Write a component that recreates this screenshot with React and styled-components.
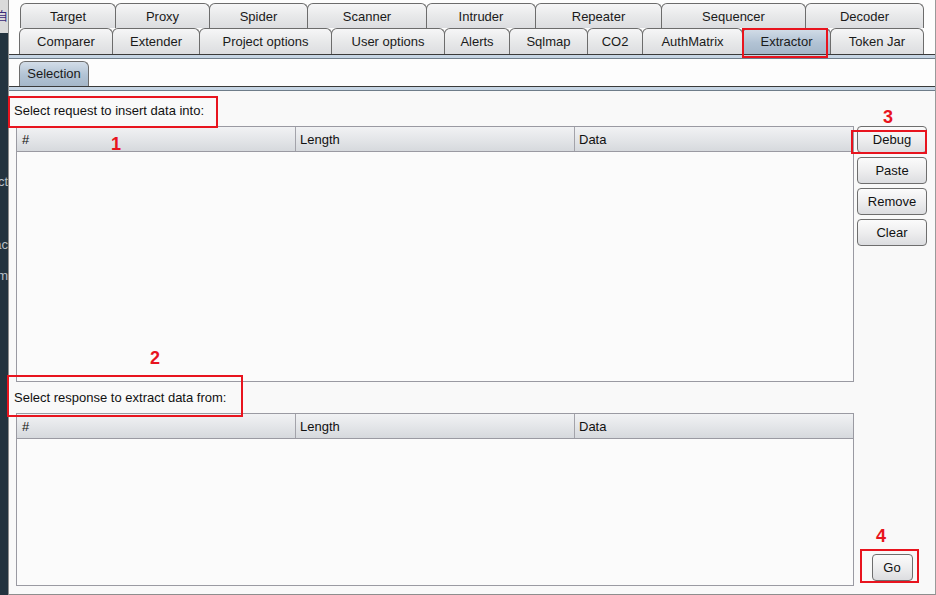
import React from "react";
import styled, { createGlobalStyle } from "styled-components";

const Global = createGlobalStyle`
  html, body { margin: 0; padding: 0; background: #f4f4f4; }
  body { font-family: "Liberation Sans", Arial, sans-serif; font-size: 13px; color: #1a1a1a; }
  * { box-sizing: border-box; }
`;

const Frame = styled.div`
  position: relative;
  width: 936px;
  height: 595px;
  display: flex;
  overflow: hidden;
`;

const Sidebar = styled.div`
  width: 8px;
  flex: none;
  display: flex;
  flex-direction: column;
  background: #23333f;
  overflow: hidden;
`;

const SideTop = styled.div`
  height: 33px;
  background: #dadada;
  color: #3a2a7a;
  font-family: "Noto Sans CJK SC", sans-serif;
  font-size: 12px;
  line-height: 1;
  padding-top: 10px;
  direction: rtl;
  white-space: nowrap;
`;

const SideText = styled.div`
  color: #b8c0c8;
  font-size: 13px;
  white-space: nowrap;
  direction: rtl;
  margin-top: ${(p) => p.$mt}px;
  line-height: 16px;
`;

const Window = styled.div`
  flex: 1;
  display: flex;
  flex-direction: column;
  border-left: 1px solid #8e8e8e;
  border-right: 1px solid #9a9a9a;
  border-bottom: 1px solid #8e8e8e;
  background: #fdfdfd;
`;

const TabStrip = styled.div`
  padding-top: 3px;
  display: flex;
  flex-direction: column;
`;

const TabRow = styled.div`
  display: flex;
  height: ${(p) => p.$h}px;
  padding-left: ${(p) => p.$pad}px;
`;

const Tab = styled.div`
  width: ${(p) => p.$w}px;
  flex: none;
  height: 100%;
  display: flex;
  align-items: center;
  justify-content: center;
  border: 1px solid #6c6c6c;
  border-bottom: none;
  border-radius: 6px 6px 0 0;
  background: ${(p) =>
    p.$active
      ? "linear-gradient(#d3dde8, #b2c3d4 55%, #a5b7c9)"
      : "linear-gradient(#f6f6f7, #e8e9ea 50%, #dcdde0)"};
  color: #1a1a1a;
  font-size: 13px;
  white-space: nowrap;
  & + & { margin-left: -1px; }
`;

const Rule = styled.div`
  height: 5px;
  flex: none;
  border-top: 1px solid #3a3a3a;
  border-bottom: 1px solid #6f7d8a;
  background: #c6d5e4;
`;

const SubTabBar = styled.div`
  height: 28px;
  display: flex;
  align-items: flex-end;
  padding-left: 10px;
  background: #fdfdfd;
`;

const SubTab = styled(Tab)`
  height: 25px;
  padding-bottom: 1px;
`;

const Content = styled.div`
  flex: 1;
  display: grid;
  grid-template-columns: 838px 70px;
  grid-template-rows: 35px 256px 31px 173px;
  column-gap: 3px;
  padding: 0 8px 8px 7px;
  background: #f9f9f9;
`;

const Label = styled.div`
  grid-column: 1 / -1;
  display: flex;
  align-items: center;
  margin-left: -2px;
  padding-top: ${(p) => p.$pt || 0}px;
  font-size: 13px;
  color: #111;
`;

const Table = styled.div`
  border: 1px solid #9a9aa2;
  background: #fbfbfb;
  display: flex;
  flex-direction: column;
`;

const HeaderRow = styled.div`
  height: 25px;
  display: grid;
  grid-template-columns: 278px 279px 1fr;
  border-bottom: 1px solid #9a9aa2;
  background: linear-gradient(#f1f2f4, #e4e6e9 50%, #d6d9dd);
`;

const HeaderCell = styled.div`
  display: flex;
  align-items: center;
  padding-left: 5px;
  font-size: 13px;
  color: #111;
  & + & { border-left: 1px solid #a3a3aa; padding-left: 4px; }
`;

const ButtonColumn = styled.div`
  display: flex;
  flex-direction: column;
  align-items: ${(p) => (p.$bottom ? "center" : "stretch")};
  justify-content: ${(p) => (p.$bottom ? "flex-end" : "flex-start")};
  gap: 4px;
  padding-bottom: ${(p) => (p.$bottom ? 5 : 0)}px;
`;

const Button = styled.div`
  height: 27px;
  width: ${(p) => (p.$w ? `${p.$w}px` : "auto")};
  display: flex;
  align-items: center;
  justify-content: center;
  border: 1px solid #6e6e6e;
  border-radius: 4px;
  background: linear-gradient(#fbfbfb, #eeeeef 50%, #dcdde0);
  font-size: 13px;
  color: #111;
`;

const RedBox = styled.div`
  position: absolute;
  border: 2px solid #e8141e;
  pointer-events: none;
`;

const RedNum = styled.div`
  position: absolute;
  color: #e8141e;
  font-family: "Liberation Sans", Arial, sans-serif;
  font-weight: bold;
  font-size: 18px;
  line-height: 18px;
`;

const row1 = [
  ["Target", 96],
  ["Proxy", 95],
  ["Spider", 99],
  ["Scanner", 120],
  ["Intruder", 110],
  ["Repeater", 127],
  ["Sequencer", 145],
  ["Decoder", 119],
];

const row2 = [
  ["Comparer", 94],
  ["Extender", 88],
  ["Project options", 133],
  ["User options", 114],
  ["Alerts", 66],
  ["Sqlmap", 79],
  ["CO2", 56],
  ["AuthMatrix", 101],
  ["Extractor", 89, true],
  ["Token Jar", 94],
];

const boxes = [
  { l: 742, t: 28, w: 86, h: 30 },
  { l: 8, t: 96, w: 210, h: 32 },
  { l: 7, t: 375, w: 236, h: 42 },
  { l: 851, t: 130, w: 76, h: 24 },
  { l: 860, t: 549, w: 59, h: 34 },
];

const nums = [
  { n: "1", l: 111, t: 135 },
  { n: "2", l: 150, t: 349 },
  { n: "3", l: 883, t: 108 },
  { n: "4", l: 876, t: 527 },
];

function DataTable() {
  return (
    <Table>
      <HeaderRow>
        <HeaderCell>#</HeaderCell>
        <HeaderCell>Length</HeaderCell>
        <HeaderCell>Data</HeaderCell>
      </HeaderRow>
    </Table>
  );
}

export default function App() {
  return (
    <Frame>
      <Global />
      <Sidebar>
        <SideTop>自</SideTop>
        <SideText $mt={141}>ct</SideText>
        <SideText $mt={47}>ac</SideText>
        <SideText $mt={15}>m</SideText>
      </Sidebar>
      <Window>
        <TabStrip>
          <TabRow $h={25} $pad={11}>
            {row1.map(([name, w]) => (
              <Tab key={name} $w={w}>{name}</Tab>
            ))}
          </TabRow>
          <TabRow $h={26} $pad={10}>
            {row2.map(([name, w, active]) => (
              <Tab key={name} $w={w} $active={active}>{name}</Tab>
            ))}
          </TabRow>
        </TabStrip>
        <Rule />
        <SubTabBar>
          <SubTab $w={70} $active>Selection</SubTab>
        </SubTabBar>
        <Rule />
        <Content>
          <Label $pt={3}>Select request to insert data into:</Label>
          <DataTable />
          <ButtonColumn>
            <Button>Debug</Button>
            <Button>Paste</Button>
            <Button>Remove</Button>
            <Button>Clear</Button>
          </ButtonColumn>
          <Label>Select response to extract data from:</Label>
          <DataTable />
          <ButtonColumn $bottom>
            <Button $w={41}>Go</Button>
          </ButtonColumn>
        </Content>
      </Window>
      {boxes.map((b, i) => (
        <RedBox key={i} style={{ left: b.l, top: b.t, width: b.w, height: b.h }} />
      ))}
      {nums.map((n) => (
        <RedNum key={n.n} style={{ left: n.l, top: n.t }}>{n.n}</RedNum>
      ))}
    </Frame>
  );
}
